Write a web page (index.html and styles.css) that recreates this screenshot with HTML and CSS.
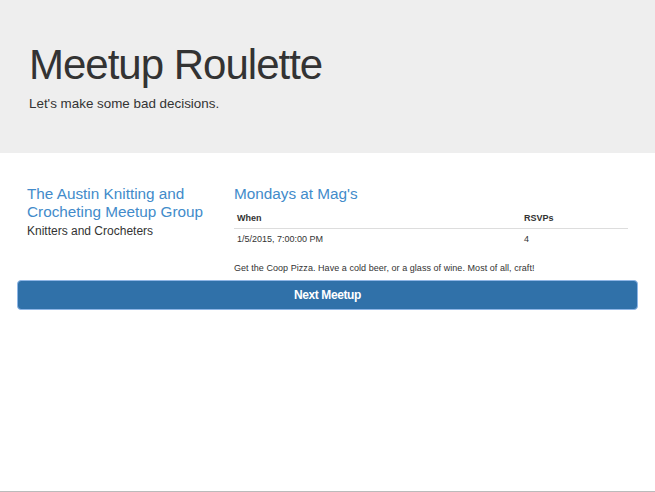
FILE: index.html
```html
<!DOCTYPE html>
<html>
<head>
<meta charset="utf-8">
<link rel="stylesheet" href="styles.css">
</head>
<body>
<header class="jumbo">
  <h1 class="title">Meetup Roulette</h1>
  <p class="lead">Let's make some bad decisions.</p>
</header>
<main class="content">
  <div class="row">
    <div class="col-group">
      <h3 class="heading">The Austin Knitting and Crocheting Meetup Group</h3>
      <p class="who">Knitters and Crocheters</p>
    </div>
    <div class="col-event">
      <h3 class="heading">Mondays at Mag's</h3>
      <table class="events">
        <thead>
          <tr><th class="c-when">When</th><th>RSVPs</th></tr>
        </thead>
        <tbody>
          <tr><td>1/5/2015, 7:00:00 PM</td><td>4</td></tr>
        </tbody>
      </table>
      <p class="desc">Get the Coop Pizza. Have a cold beer, or a glass of wine. Most of all, craft!</p>
    </div>
  </div>
  <button class="next">Next Meetup</button>
</main>
</body>
</html>
```
FILE: styles.css
```css
html, body {
  margin: 0;
  padding: 0;
  height: 100%;
}
body {
  font-family: "Liberation Sans", Arial, sans-serif;
  color: #333;
  background: #fff;
  box-sizing: border-box;
  border-bottom: 1px solid #bbb;
}
.jumbo {
  background: #eee;
  height: 153px;
  box-sizing: border-box;
  padding: 39px 29px 0;
}
.title {
  margin: 0;
  font-size: 42px;
  letter-spacing: -1px;
  font-weight: normal;
  line-height: 52px;
  color: #333;
}
.lead {
  margin: 4px 0 0;
  font-size: 13.4px;
  line-height: 18px;
  color: #333;
}
.content {
  padding: 32px 17px 0;
}
.row {
  display: grid;
  grid-template-columns: 1fr 2fr;
}
.col-group, .col-event {
  padding: 0 10px;
}
.heading {
  margin: 0;
  font-size: 15.3px;
  line-height: 18px;
  font-weight: normal;
  color: #428bca;
}
.who {
  margin: 2px 0 0;
  font-size: 12px;
  line-height: 16px;
}
.events {
  width: 100%;
  border-collapse: collapse;
  margin-top: 5px;
  font-size: 9px;
}
.events th, .events td {
  text-align: left;
  padding: 4px 3px;
  line-height: 12px;
}
.events th {
  font-weight: bold;
  border-bottom: 1px solid #ddd;
}
.events th.c-when {
  width: 281px;
}
.desc {
  margin: 13px 0 0;
  font-size: 9px;
  line-height: 12px;
  letter-spacing: 0.05px;
}
.next {
  display: block;
  width: 100%;
  margin-top: 6px;
  height: 30px;
  background: #3071a9;
  border: 1px solid #8fb6e6;
  border-radius: 4px;
  color: #fff;
  font-family: "Liberation Sans", Arial, sans-serif;
  font-weight: bold;
  font-size: 12px;
  letter-spacing: -0.4px;
}
```
